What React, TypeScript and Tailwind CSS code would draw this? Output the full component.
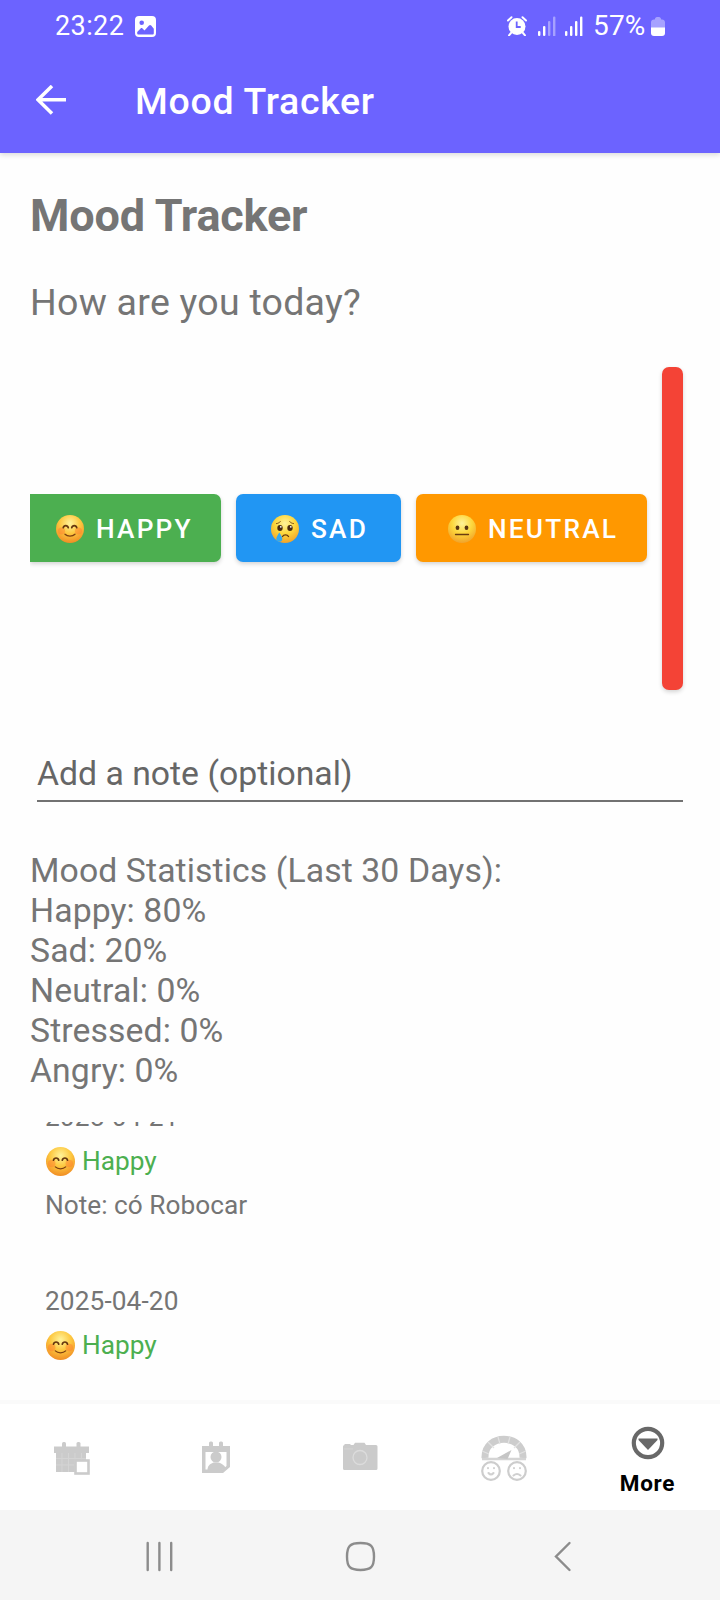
import React from 'react';

type Mood = 'happy' | 'sad' | 'neutral';

function Emoji({ mood, className }: { mood: Mood; className: string }) {
  const id = `face-${mood}-${React.useId().replace(/:/g, '')}`;
  return (
    <svg viewBox="0 0 28 28" className={className} aria-hidden="true">
      <defs>
        <radialGradient id={id} cx="0.5" cy="0.3" r="0.72">
          <stop offset="0" stopColor="#fff39a" />
          <stop offset="0.5" stopColor={mood === 'happy' ? '#fdc840' : '#fdd73c'} />
          <stop offset="1" stopColor={mood === 'happy' ? '#f08a22' : '#f0a02a'} />
        </radialGradient>
      </defs>
      <circle cx="14" cy="14" r="14" fill={`url(#${id})`} />
      {mood === 'happy' && (
        <g fill="none" strokeLinecap="round">
          <circle cx="5.5" cy="16" r="3.6" fill="#ff7b2e" opacity="0.45" />
          <circle cx="22.5" cy="16" r="3.6" fill="#ff7b2e" opacity="0.45" />
          <path d="M7.200 12.800c.7-2.900 4.400-2.900 5.100 0M15.700 12.800c.7-2.900 4.400-2.900 5.100 0" stroke="#65370f" strokeWidth="1.600" />
          <path d="M9 19.200c2.600 2.500 7.400 2.500 10 0" stroke="#7d3f10" strokeWidth="1.300" />
        </g>
      )}
      {mood === 'sad' && (
        <g>
          <ellipse cx="9" cy="13" rx="2.700" ry="3" fill="#4a2a10" />
          <ellipse cx="19" cy="13" rx="2.700" ry="3" fill="#4a2a10" />
          <circle cx="9.800" cy="11.800" r="0.900" fill="#fff" />
          <circle cx="19.800" cy="11.800" r="0.900" fill="#fff" />
          <path d="M5.500 8.600c1.500-.2 3-1 3.800-2M22.500 8.600c-1.500-.2-3-1-3.800-2" fill="none" stroke="#7d4a12" strokeWidth="1" strokeLinecap="round" />
          <path d="M11.500 21.500c1.200-2.200 4.800-2.200 6 0" fill="none" stroke="#65370f" strokeWidth="1.400" strokeLinecap="round" />
          <path d="M8.300 17.500c1.500 2.600 3 4.400 3 6.300a3 3 0 0 1-6 0c0-1.900 1.500-3.700 3-6.300z" fill="#36a9ee" />
        </g>
      )}
      {mood === 'neutral' && (
        <g>
          <ellipse cx="9.500" cy="12.800" rx="1.900" ry="2.200" fill="#5a3510" />
          <ellipse cx="18.500" cy="12.800" rx="1.900" ry="2.200" fill="#5a3510" />
          <path d="M7.500 19.500h13" stroke="#6b3d10" strokeWidth="1.300" strokeLinecap="round" />
        </g>
      )}
    </svg>
  );
}

function SignalBars({ active }: { active: number }) {
  return (
    <svg viewBox="0 0 18 20" className="h-5 w-[18px]" aria-hidden="true">
      {[0, 1, 2, 3].map((i) => (
        <rect key={i} x={i * 5} y={15 - i * 5 + (i === 3 ? 0.5 : 0)} width="2.400" height={5 + i * 5} rx="1.100" fill="#fff" opacity={i < active ? 1 : 0.4} />
      ))}
    </svg>
  );
}

function StatusBar() {
  return (
    <div className="flex h-[52px] items-center justify-between pl-[55px] pr-[55px] text-white">
      <div className="flex items-center">
        <span className="w-20 text-[27px] leading-[52px] tracking-[0.4px]">23:22</span>
        <svg viewBox="0 0 21 21" className="h-[21px] w-[21px]" aria-hidden="true">
          <path fillRule="evenodd" fill="#fff" d="M4 0h13a4 4 0 0 1 4 4v13a4 4 0 0 1-4 4H4a4 4 0 0 1-4-4V4a4 4 0 0 1 4-4zM6.700 4.400a2.300 2.300 0 1 0 0 4.600 2.300 2.300 0 0 0 0-4.600zM2.200 17.200c0 .9.500 1.300 1.300 1.300h14c.8 0 1.300-.5 1.300-1.300v-4.500l-2.600-3.200c-.7-.8-1.500-.8-2.200 0l-4.500 5-2-2c-.6-.6-1.300-.6-1.900 0l-3.400 3.500z" />
        </svg>
      </div>
      <div className="flex items-center">
        <svg viewBox="0 0 20 20" className="mr-[11px] h-5 w-5" aria-hidden="true">
          <circle cx="10" cy="10.500" r="8.500" fill="#fff" />
          <path d="M1 4.500 4.500 1.200M19 4.500l-3.500-3.300M4 17l-2 2.300M16 17l2 2.300" stroke="#fff" strokeWidth="2" strokeLinecap="round" />
          <path d="M9.700 5.500v5.500h4" fill="none" stroke="#6c63ff" strokeWidth="1.800" />
        </svg>
        <SignalBars active={2} />
        <span className="w-[9px]" />
        <SignalBars active={4} />
        <span className="ml-[10px] w-[58px] text-[28px] leading-[52px] tracking-[0.200px] whitespace-nowrap">57%</span>
        <svg viewBox="0 0 14 19" className="h-[19px] w-[14px]" aria-hidden="true">
          <path d="M0 5.500C0 3.600 1.200 2.500 3 2.500h.8C4 1 4.800 0 6 0h2c1.200 0 2 1 2.200 2.500h.8c1.800 0 3 1.100 3 3V11H0z" fill="#fff" opacity="0.4" />
          <path d="M0 10.500h14V16c0 1.900-1 3-3 3H3c-2 0-3-1.100-3-3z" fill="#fff" />
        </svg>
      </div>
    </div>
  );
}

function AppBar() {
  return (
    <div className="flex h-[101px] items-start text-white">
      <svg viewBox="0 0 30 30" className="mt-[33px] ml-9 h-[30px] w-[30px]" aria-hidden="true">
        <path d="M30 14.700H2M16 1 2 14.700 16 28.500" fill="none" stroke="#fff" strokeWidth="3.500" />
      </svg>
      <h2 className="mt-[27px] ml-[69px] text-[37.500px] leading-[44px] font-medium tracking-[0.700px]">Mood Tracker</h2>
    </div>
  );
}

const shadow = 'shadow-[0_2px_4px_rgba(0,0,0,0.17)]';

function MoodButtons() {
  const base = `flex h-[68px] shrink-0 items-center text-[26.250px] leading-[31px] font-medium tracking-[2.200px] text-white ${shadow}`;
  return (
    <div className="mt-[43px] flex h-[323px] items-start">
      <div className="mt-[127px] flex h-[76px] w-[199px] items-start overflow-hidden">
        <button className={`${base} w-[191px] rounded-r-[7px] bg-[#4caf50] pl-[26px]`}>
          <Emoji mood="happy" className="mt-0.5 mr-3 h-7 w-7" />
          <span className="mt-[3px]">HAPPY</span>
        </button>
      </div>
      <button className={`${base} mt-[127px] ml-[7px] w-[165px] rounded-[7px] bg-[#2196f3] pl-[35px]`}>
        <Emoji mood="sad" className="mt-0.5 mr-3 h-7 w-7" />
        <span className="mt-[3px]">SAD</span>
      </button>
      <button className={`${base} mt-[127px] ml-[15px] w-[231px] rounded-[7px] bg-[#ff9800] pl-[32px]`}>
        <Emoji mood="neutral" className="mt-0.5 mr-3 h-7 w-7" />
        <span className="mt-[3px]">NEUTRAL</span>
      </button>
      <button aria-label="Stressed" className={`ml-[15px] h-[323px] w-[21px] rounded-[7px] bg-[#f44336] ${shadow}`} />
    </div>
  );
}

const statistics = [
  'Mood Statistics (Last 30 Days):',
  'Happy: 80%',
  'Sad: 20%',
  'Neutral: 0%',
  'Stressed: 0%',
  'Angry: 0%',
];

function Entry({ date, note }: { date: string; note?: string }) {
  return (
    <div className="flex flex-col gap-[13px]">
      <p className="tracking-[0.100px]">{date}</p>
      <p className="flex items-center text-[#4caf50]">
        <Emoji mood="happy" className="mr-[7px] ml-px h-[29px] w-[29px]" />
        Happy
      </p>
      {note && <p>{note}</p>}
    </div>
  );
}

function CalendarIcon() {
  return (
    <svg viewBox="0 0 38 36" className="h-9 w-[38px]" aria-hidden="true">
      <g fill="#cbcbcb">
        <rect x="9" y="1" width="4" height="7" rx="1.500" />
        <rect x="23.500" y="1" width="4" height="7" rx="1.500" />
        <rect x="1" y="5.500" width="35" height="6.500" />
        <rect x="3" y="12" width="30" height="19" />
      </g>
      <path d="M3 17.500h30M3 24h30M9 12v19M15.500 12v19M22 12v19M28.500 12v8" stroke="#d4d4d4" strokeWidth="1" />
      <rect x="22.500" y="19.500" width="13" height="13" fill="#fff" stroke="#cbcbcb" strokeWidth="2.600" />
    </svg>
  );
}

function ContactIcon() {
  return (
    <svg viewBox="0 0 30 33" className="h-[33px] w-[30px]" aria-hidden="true">
      <g fill="#cbcbcb">
        <rect x="8" y="0.500" width="4" height="7" rx="1.500" />
        <rect x="18" y="0.500" width="4" height="7" rx="1.500" />
        <path fillRule="evenodd" d="M1 5h28v21l-7 6H1zM4.500 11v17.500h17L25.500 25V11z" />
        <circle cx="15" cy="16" r="5.500" />
        <path d="M6.500 29c0-5 3.500-6.500 6-7.500h5c3 1 5.500 2.500 7 5l-4 3.500H6.500z" />
      </g>
    </svg>
  );
}

function CameraIcon() {
  return (
    <svg viewBox="0 0 36 29" className="h-[29px] w-9" aria-hidden="true">
      <path d="M1 4.500Q1 3 2.500 3V2h6v1h3L13 .8h9.500L24 3h10q1.500 0 1.500 1.500v22q0 1.500-1.500 1.500H2.500Q1 28 1 26.500z" fill="#cbcbcb" />
      <circle cx="18" cy="15.500" r="7" fill="none" stroke="#dcdcdc" strokeWidth="1.300" />
      <path d="M2 7h9" stroke="#d4d4d4" />
    </svg>
  );
}

function MoodMeterIcon() {
  return (
    <svg viewBox="0 0 46 46" className="h-[46px] w-[46px]" aria-hidden="true">
      <path d="M4 23C3-2 43-2 42 23" fill="none" stroke="#cdcdcd" strokeWidth="7" />
      <path d="m1 16 7 3M7 7l6 6M17 2l2 7M29 2l-2 7M39 7l-6 6M45 16l-7 3" stroke="#e2e2e2" strokeWidth="1.200" />
      <path d="M1 24h44" stroke="#d4d4d4" strokeWidth="2.500" />
      <path d="m16 23 14.500-8-4 9z" fill="#c5c5c5" />
      <g fill="#fff" stroke="#cdcdcd" strokeWidth="2.200">
        <circle cx="10" cy="36" r="8.800" />
        <circle cx="36" cy="36" r="8.800" />
      </g>
      <g fill="none" stroke="#d0d0d0" strokeWidth="2" strokeLinecap="round">
        <path d="M7 33v.2M13 33v.2M7.500 38q2.500 3 5 0M33 33v.2M39 33v.2M32.500 40.500q3.500-3 7 0" />
      </g>
    </svg>
  );
}

function BottomNav() {
  return (
    <nav className="grid h-[110px] shrink-0 grid-cols-5 border-t-4 border-[#fafafa] bg-white">
      <div className="flex justify-center pt-[37px]"><CalendarIcon /></div>
      <div className="flex justify-center pt-[37px] pr-px"><ContactIcon /></div>
      <div className="flex justify-center pt-[38px] pr-px"><CameraIcon /></div>
      <div className="flex justify-center pt-[31px] pr-px"><MoodMeterIcon /></div>
      <div className="flex flex-col items-center pt-[22px] pr-px">
        <svg viewBox="0 0 34 34" className="h-[34px] w-[34px]" aria-hidden="true">
          <circle cx="17" cy="17" r="14.200" fill="none" stroke="#686868" strokeWidth="4.200" />
          <path d="M7.500 12.500h19v1.500L17 24l-9.500-10z" fill="#686868" />
        </svg>
        <span className="mt-[10px] text-[22.500px] leading-[26px] font-bold tracking-[0.700px] text-black">More</span>
      </div>
    </nav>
  );
}

function SystemNav() {
  return (
    <div className="flex h-[90px] shrink-0 items-start bg-[#f5f5f5] pt-[30px] pl-[145px]">
      <svg viewBox="0 0 30 32" className="h-8 w-[30px]" aria-hidden="true">
        <path d="M2.700 3v27M14.400 3v27M26.200 3v27" stroke="#8c8c8c" strokeWidth="2.400" strokeLinecap="round" />
      </svg>
      <svg viewBox="0 0 32 32" className="ml-[169px] h-8 w-8" aria-hidden="true">
        <path d="M16.500 3c10.500 0 13.500 3 13.500 13.500S27 30 16.500 30 3 27 3 16.500 6 3 16.500 3z" fill="none" stroke="#8c8c8c" strokeWidth="2.400" />
      </svg>
      <svg viewBox="0 0 20 32" className="ml-[176px] h-8 w-5" aria-hidden="true">
        <path d="M17.500 3 4 16.500 17.500 30" fill="none" stroke="#8c8c8c" strokeWidth="2.400" strokeLinecap="round" />
      </svg>
    </div>
  );
}

export default function App() {
  return (
    <div className="flex h-[1600px] w-[720px] flex-col overflow-hidden bg-[#fefefe] font-['Roboto',sans-serif] text-[#757575]">
      <header className="z-10 h-[153px] shrink-0 bg-[#6c63ff] shadow-[0_2px_5px_rgba(0,0,0,0.14)]">
        <StatusBar />
        <AppBar />
      </header>
      <main className="flex h-[1247px] shrink-0 flex-col px-[30px] pt-9">
        <h1 className="text-[45px] leading-[53px] font-bold tracking-[-0.180px]">Mood Tracker</h1>
        <p className="mt-[38px] text-[37.500px] leading-[44px] tracking-[0.250px]">How are you today?</p>
        <MoodButtons />
        <div className="mt-[64px] mr-[7px] ml-[7px] h-[48px] border-b-2 border-[#727272] text-[33.750px] leading-[40px] text-[#666666]">
          Add a note (optional)
        </div>
        <div className="mt-[49px] text-[33.750px] leading-[40px] tracking-[0.100px]">
          {statistics.map((line) => (
            <p key={line}>{line}</p>
          ))}
        </div>
        <div className="mt-[31px] h-[278px] overflow-hidden pl-[15px] text-[26.250px] leading-[31px]">
          <div className="-mt-[20px] flex flex-col gap-[65px]">
            <Entry date="2025-04-21" note="Note: có Robocar" />
            <Entry date="2025-04-20" />
          </div>
        </div>
      </main>
      <BottomNav />
      <SystemNav />
    </div>
  );
}
